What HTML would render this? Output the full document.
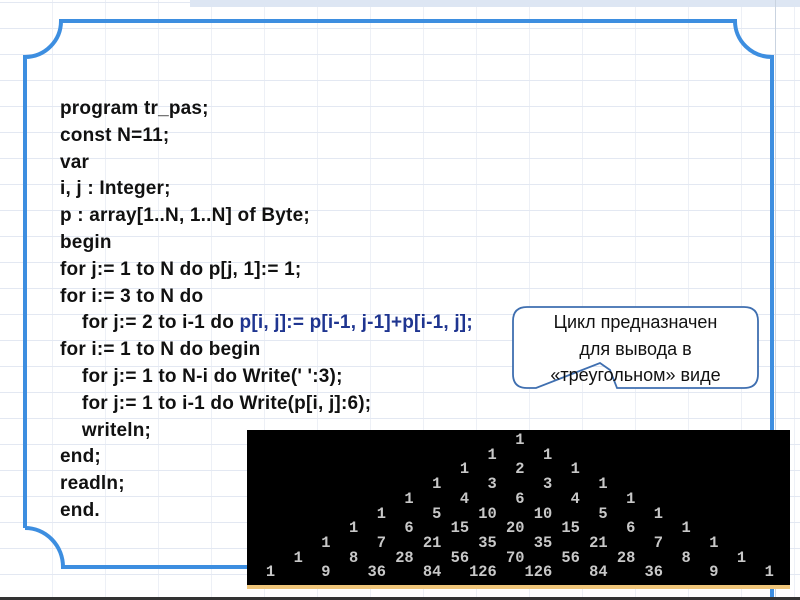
<!DOCTYPE html>
<html><head><meta charset="utf-8"><style>
html,body{margin:0;padding:0}
body{width:800px;height:600px;position:relative;overflow:hidden;background:#fff;
background-image:repeating-linear-gradient(0deg,transparent 0 25px,#e3e8f2 25px 26px),repeating-linear-gradient(90deg,transparent 0 52px,#edf0f6 52px 53px);}
.code{position:absolute;left:60px;top:96px;font:bold 19px/26.8px "Liberation Sans",sans-serif;letter-spacing:0.2px;color:#111;white-space:pre}
.b{color:#1f3590}
.con{position:absolute;left:247px;top:430px;width:543px;height:155px;background:#000;border-bottom:4px solid #efc57a}
pre{position:absolute;left:192px;top:433px;margin:0;font:bold 15.4px/14.7px "Liberation Mono",monospace;color:#c8c8c8}
.call{position:absolute;left:513px;top:309px;width:245px;text-align:center;font:18px/26.5px "Liberation Sans",sans-serif;color:#111}
</style></head><body>
<div style="position:absolute;left:190px;top:0;width:610px;height:7px;background:#dde6f3"></div>
<div style="position:absolute;left:775px;top:0;width:1px;height:600px;background:#c9d3e0"></div>
<svg width="800" height="600" style="position:absolute;left:0;top:0">
<path d="M25 528 V57 A36 36 0 0 0 61 21 H735 A37 36 0 0 0 772 57 V600" fill="none" stroke="#3d8ee0" stroke-width="4"/>
<path d="M25 528 A38 39 0 0 1 63 567 H260" fill="none" stroke="#3d8ee0" stroke-width="4"/>
<path d="M527 307 H744 Q758 307 758 321 V374 Q758 388 744 388 H617 L610 370 L600 363 L536 388 H527 Q513 388 513 374 V321 Q513 307 527 307 Z" fill="#fff" stroke="#3f6fb0" stroke-width="1.8"/>
<rect x="0" y="597" width="800" height="3" fill="#333"/>
</svg>
<div class="code">program tr_pas;
const N=11;
var
i, j : Integer;
p : array[1..N, 1..N] of Byte;
begin
for j:= 1 to N do p[j, 1]:= 1;
for i:= 3 to N do
    for j:= 2 to i-1 do <span class="b">p[i, j]:= p[i-1, j-1]+p[i-1, j];</span>
for i:= 1 to N do begin
    for j:= 1 to N-i do Write(' ':3);
    for j:= 1 to i-1 do Write(p[i, j]:6);
    writeln;
end;
readln;
end.</div>
<div class="call">Цикл предназначен<br>для вывода в<br>«треугольном» виде</div>
<div class="con"></div>
<pre>                                   1
                                1     1
                             1     2     1
                          1     3     3     1
                       1     4     6     4     1
                    1     5    10    10     5     1
                 1     6    15    20    15     6     1
              1     7    21    35    35    21     7     1
           1     8    28    56    70    56    28     8     1
        1     9    36    84   126   126    84    36     9     1</pre>
</body></html>
